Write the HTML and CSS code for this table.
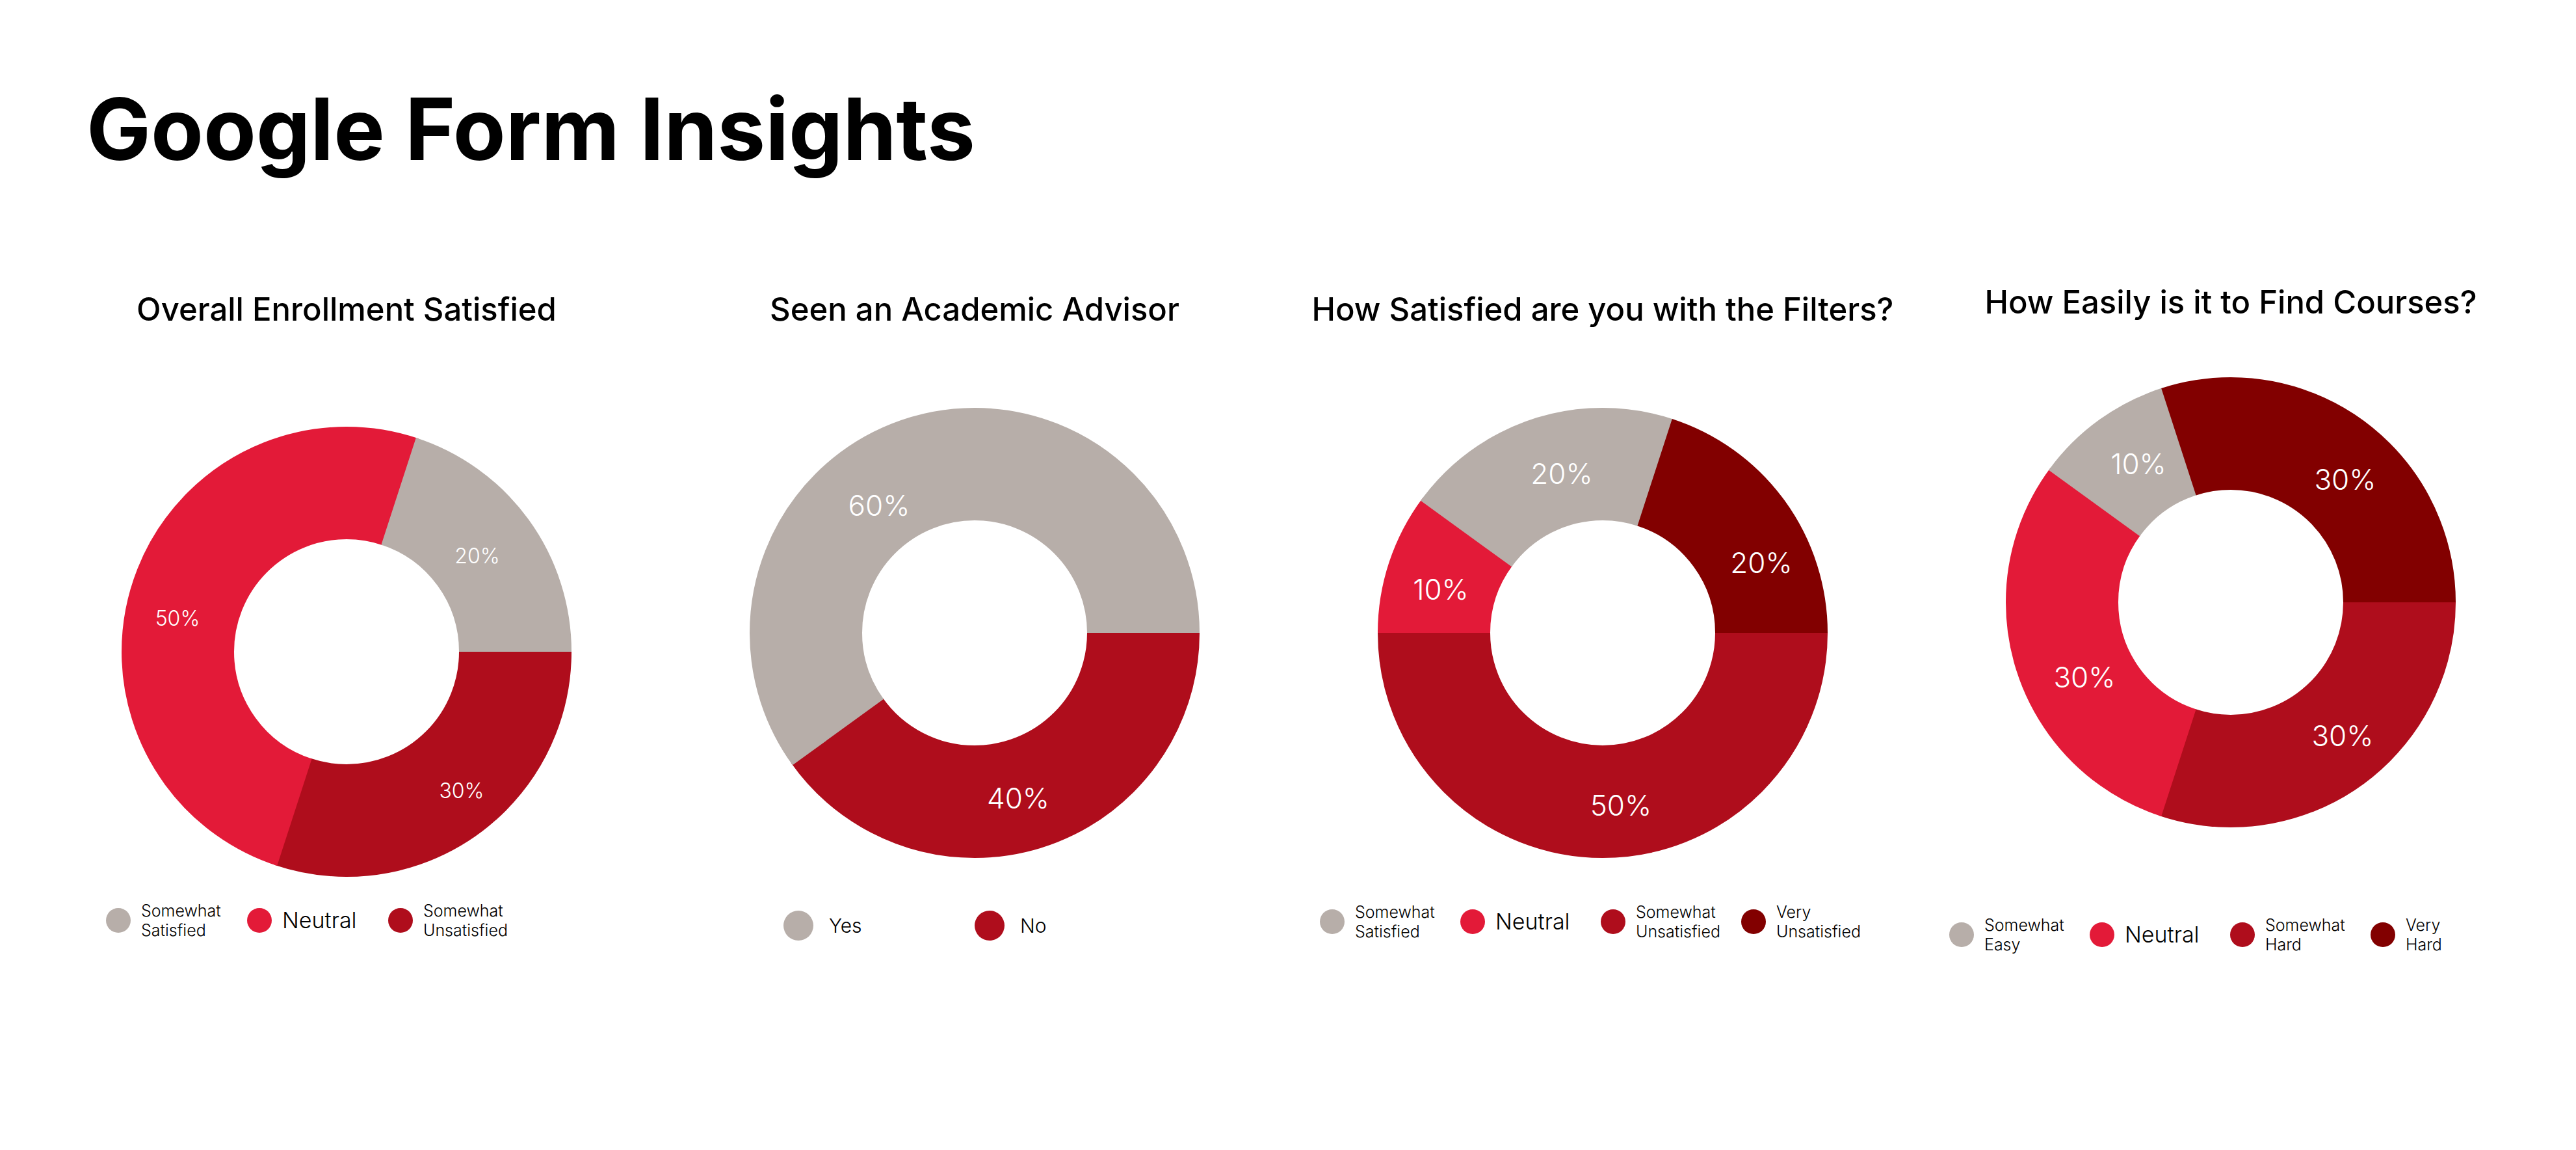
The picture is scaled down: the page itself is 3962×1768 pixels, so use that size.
FILE: index.html
```html
<!DOCTYPE html>
<html lang="en">
<head>
<meta charset="utf-8">
<title>Google Form Insights</title>
<link rel="stylesheet" href="styles.css">
</head>
<body>
<main class="page">
  <h1 class="title">Google Form Insights</h1>
  <section class="charts">
    <article class="chart chart--1">
      <h2 class="chart-title">Overall Enrollment Satisfied</h2>
      <svg class="donut" viewBox="0 0 692 692" width="692" height="692">
        <circle class="seg seg--dark" cx="346" cy="346" r="259.5" pathLength="100" stroke-dasharray="30.2 100" stroke-dashoffset="0"></circle>
        <circle class="seg seg--neutral" cx="346" cy="346" r="259.5" pathLength="100" stroke-dasharray="50.2 100" stroke-dashoffset="-30"></circle>
        <circle class="seg seg--gray" cx="346" cy="346" r="259.5" pathLength="100" stroke-dasharray="20.2 100" stroke-dashoffset="-80"></circle>
        <text class="pct pct--sm" x="547" y="198">20%</text>
        <text class="pct pct--sm" x="86" y="294">50%</text>
        <text class="pct pct--sm" x="523" y="559">30%</text>
      </svg>
      <ul class="legend legend--1">
        <li class="legend-item"><span class="dot dot--gray"></span><span class="legend-text">Somewhat<br>Satisfied</span></li>
        <li class="legend-item"><span class="dot dot--neutral"></span><span class="legend-text legend-text--big">Neutral</span></li>
        <li class="legend-item"><span class="dot dot--dark"></span><span class="legend-text">Somewhat<br>Unsatisfied</span></li>
      </ul>
    </article>

    <article class="chart chart--2">
      <h2 class="chart-title">Seen an Academic Advisor</h2>
      <svg class="donut" viewBox="0 0 692 692" width="692" height="692">
        <circle class="seg seg--dark" cx="346" cy="346" r="259.5" pathLength="100" stroke-dasharray="40.2 100" stroke-dashoffset="0"></circle>
        <circle class="seg seg--gray" cx="346" cy="346" r="259.5" pathLength="100" stroke-dasharray="60.2 100" stroke-dashoffset="-40"></circle>
        <text class="pct" x="199" y="150">60%</text>
        <text class="pct" x="413" y="600">40%</text>
      </svg>
      <ul class="legend legend--2">
        <li class="legend-item"><span class="dot dot--big dot--gray"></span><span class="legend-text legend-text--mid">Yes</span></li>
        <li class="legend-item"><span class="dot dot--big dot--dark"></span><span class="legend-text legend-text--mid">No</span></li>
      </ul>
    </article>

    <article class="chart chart--3">
      <h2 class="chart-title">How Satisfied are you with the Filters?</h2>
      <svg class="donut" viewBox="0 0 692 692" width="692" height="692">
        <circle class="seg seg--dark" cx="346" cy="346" r="259.5" pathLength="100" stroke-dasharray="50.2 100" stroke-dashoffset="0"></circle>
        <circle class="seg seg--neutral" cx="346" cy="346" r="259.5" pathLength="100" stroke-dasharray="10.2 100" stroke-dashoffset="-50"></circle>
        <circle class="seg seg--gray" cx="346" cy="346" r="259.5" pathLength="100" stroke-dasharray="20.2 100" stroke-dashoffset="-60"></circle>
        <circle class="seg seg--maroon" cx="346" cy="346" r="259.5" pathLength="100" stroke-dasharray="20.2 100" stroke-dashoffset="-80"></circle>
        <text class="pct" x="283" y="101">20%</text>
        <text class="pct" x="590" y="238">20%</text>
        <text class="pct" x="97" y="279">10%</text>
        <text class="pct" x="374" y="611">50%</text>
      </svg>
      <ul class="legend legend--3">
        <li class="legend-item"><span class="dot dot--gray"></span><span class="legend-text">Somewhat<br>Satisfied</span></li>
        <li class="legend-item"><span class="dot dot--neutral"></span><span class="legend-text legend-text--big">Neutral</span></li>
        <li class="legend-item"><span class="dot dot--dark"></span><span class="legend-text">Somewhat<br>Unsatisfied</span></li>
        <li class="legend-item"><span class="dot dot--maroon"></span><span class="legend-text">Very<br>Unsatisfied</span></li>
      </ul>
    </article>

    <article class="chart chart--4">
      <h2 class="chart-title">How Easily is it to Find Courses?</h2>
      <svg class="donut" viewBox="0 0 692 692" width="692" height="692">
        <circle class="seg seg--dark" cx="346" cy="346" r="259.5" pathLength="100" stroke-dasharray="30.2 100" stroke-dashoffset="0"></circle>
        <circle class="seg seg--neutral" cx="346" cy="346" r="259.5" pathLength="100" stroke-dasharray="30.2 100" stroke-dashoffset="-30"></circle>
        <circle class="seg seg--gray" cx="346" cy="346" r="259.5" pathLength="100" stroke-dasharray="10.2 100" stroke-dashoffset="-60"></circle>
        <circle class="seg seg--maroon" cx="346" cy="346" r="259.5" pathLength="100" stroke-dasharray="30.2 100" stroke-dashoffset="-70"></circle>
        <text class="pct" x="204" y="133">10%</text>
        <text class="pct" x="522" y="157">30%</text>
        <text class="pct" x="121" y="461">30%</text>
        <text class="pct" x="518" y="551">30%</text>
      </svg>
      <ul class="legend legend--4">
        <li class="legend-item"><span class="dot dot--gray"></span><span class="legend-text">Somewhat<br>Easy</span></li>
        <li class="legend-item"><span class="dot dot--neutral"></span><span class="legend-text legend-text--big">Neutral</span></li>
        <li class="legend-item"><span class="dot dot--dark"></span><span class="legend-text">Somewhat<br>Hard</span></li>
        <li class="legend-item"><span class="dot dot--maroon"></span><span class="legend-text">Very<br>Hard</span></li>
      </ul>
    </article>
  </section>
</main>
</body>
</html>
```

FILE: styles.css
```css
* {
  box-sizing: border-box;
}

html, body {
  margin: 0;
  padding: 0;
  background: #ffffff;
}

body {
  width: 3962px;
  height: 1768px;
  overflow: hidden;
  font-family: "Inter", "Noto Sans", "Liberation Sans", sans-serif;
  color: #000000;
}

.page {
  padding-top: 120px;
}

.title {
  margin: 0 0 0 133px;
  font-size: 132px;
  line-height: 156px;
  font-weight: 700;
  letter-spacing: 0;
}

.charts {
  display: grid;
  grid-template-columns: repeat(4, 966px);
  margin: 160px 0 0 50px;
}

.chart {
  display: flex;
  flex-direction: column;
  align-items: center;
}

.chart--1,
.chart--2,
.chart--3 {
  padding-top: 11px;
}

.chart-title {
  margin: 0;
  font-size: 49px;
  line-height: 58px;
  font-weight: 500;
  white-space: nowrap;
}

.donut {
  display: block;
  flex: none;
}

.chart--1 .donut { margin-top: 151px; }
.chart--2 .donut { margin-top: 122px; }
.chart--3 .donut { margin-top: 122px; }
.chart--4 .donut { margin-top: 86px; }

.seg {
  fill: none;
  stroke-width: 173;
}

.seg--gray { stroke: #b7aea9; }
.seg--neutral { stroke: #e31a38; }
.seg--dark { stroke: #af0d1c; }
.seg--maroon { stroke: #820000; }

.pct {
  fill: #ffffff;
  font-family: "Inter", "Noto Sans", sans-serif;
  font-size: 44px;
  font-weight: 300;
  text-anchor: middle;
  dominant-baseline: central;
}

.pct--sm {
  font-size: 32px;
}

.legend {
  list-style: none;
  margin: 0;
  padding: 0;
  align-self: stretch;
  display: grid;
  grid-template-columns: repeat(4, 216px);
  align-items: center;
}

.legend--1 {
  grid-template-columns: repeat(3, 217px);
  padding-left: 113px;
  margin-top: 37px;
}

.legend--2 {
  grid-template-columns: repeat(2, 294px);
  padding-left: 189px;
  margin-top: 81px;
}

.legend--3 {
  padding-left: 48px;
  margin-top: 68px;
}

.legend--4 {
  padding-left: 50px;
  margin-top: 135px;
}

.legend-item {
  display: flex;
  align-items: center;
  gap: 16px;
}

.dot {
  flex: none;
  width: 38px;
  height: 38px;
  border-radius: 50%;
}

.dot--big {
  width: 46px;
  height: 46px;
  margin-right: 8px;
}

.dot--gray { background: #b7aea9; }
.dot--neutral { background: #e31a38; }
.dot--dark { background: #af0d1c; }
.dot--maroon { background: #820000; }

.legend-text {
  font-size: 25px;
  line-height: 30px;
  font-weight: 300;
  white-space: nowrap;
}

.legend-text--big {
  font-size: 34px;
  line-height: 40px;
}

.legend-text--mid {
  font-size: 30px;
  line-height: 40px;
}
```
